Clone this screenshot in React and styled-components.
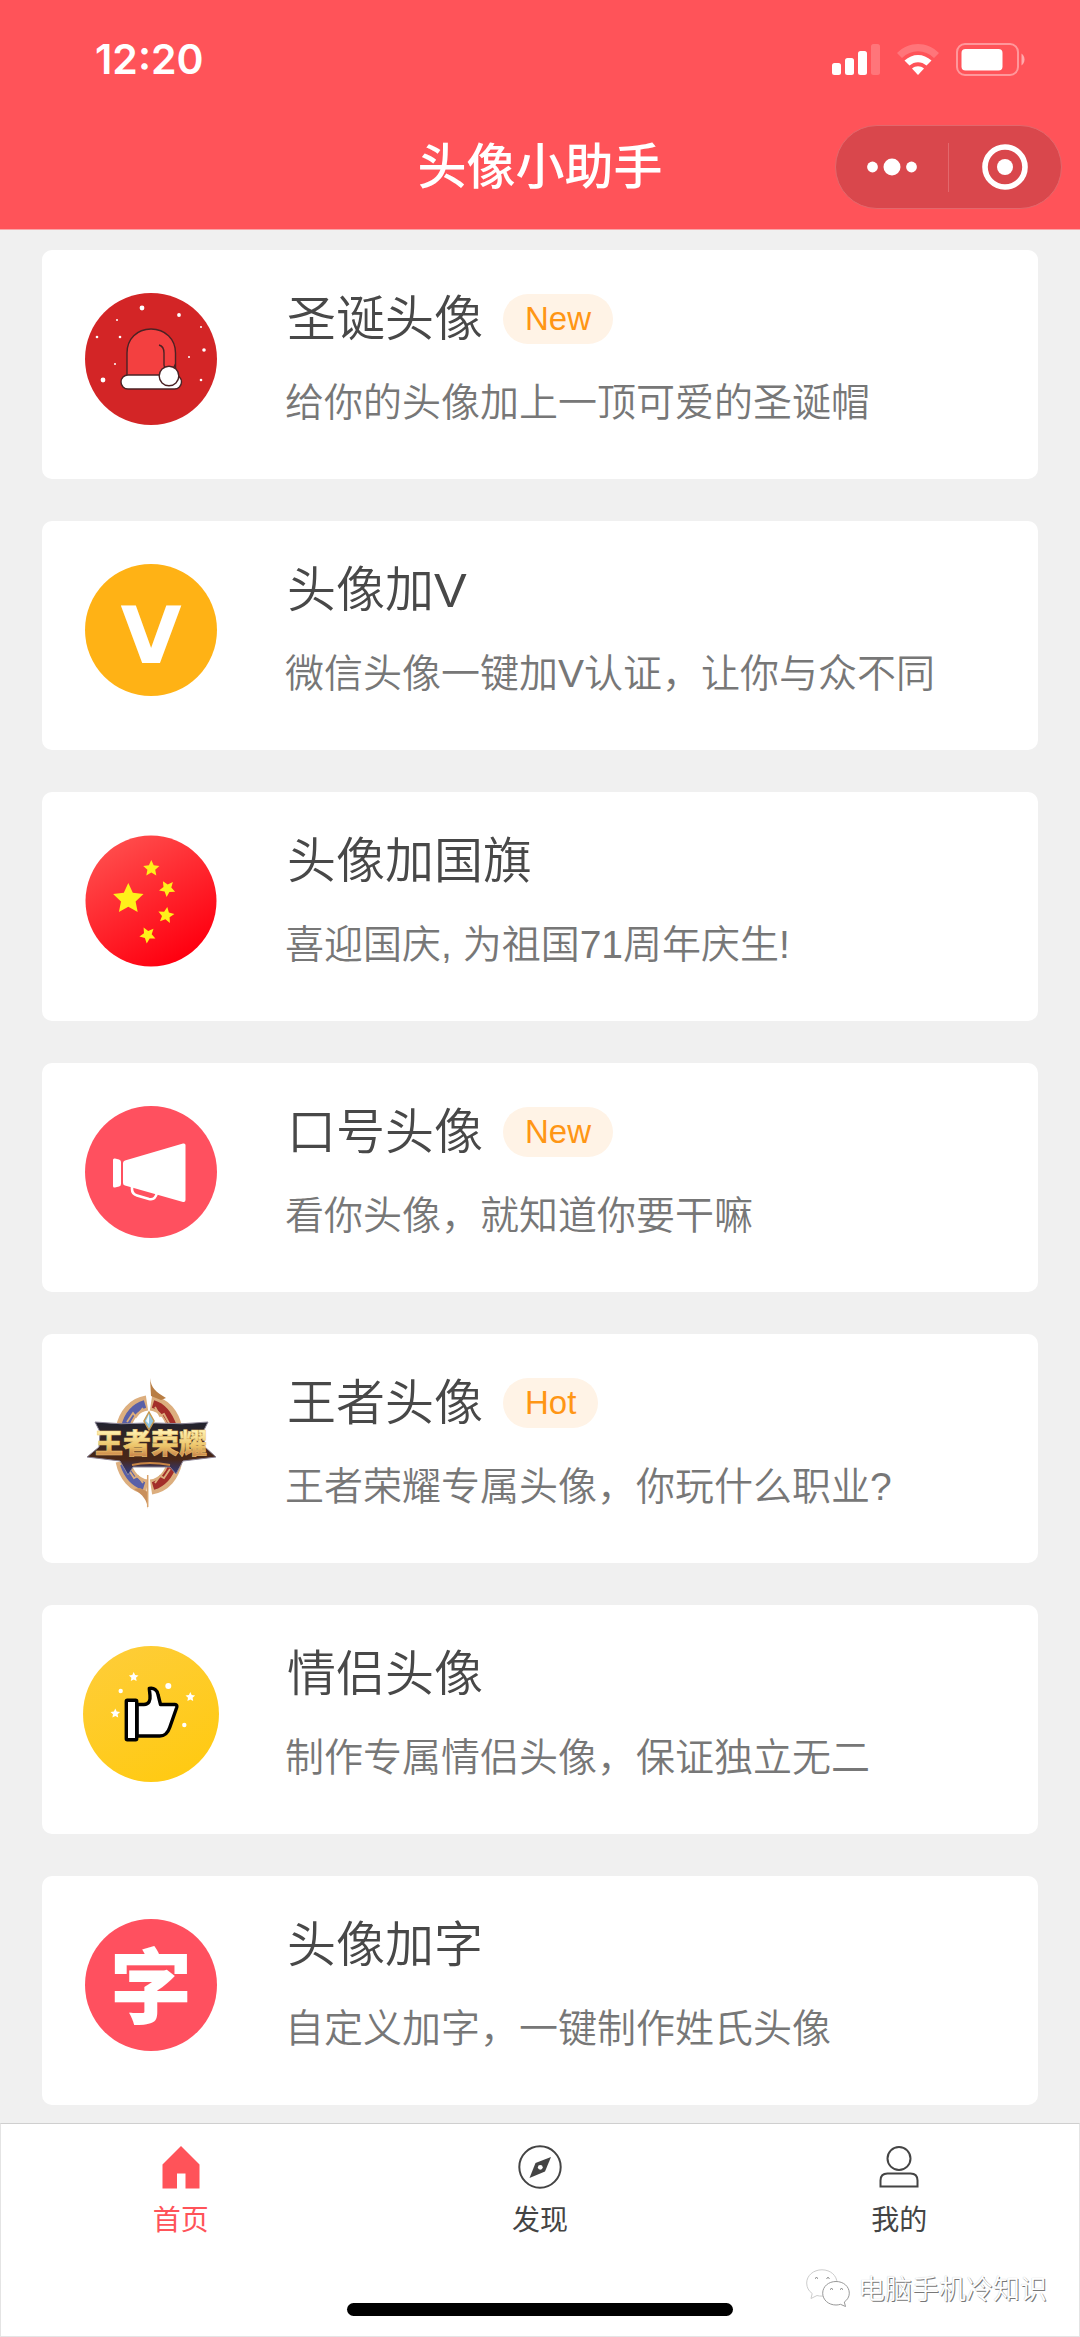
import styled, { createGlobalStyle } from 'styled-components';

const GlobalStyle = createGlobalStyle`
    * {
        box-sizing: border-box;
    }
    body {
        margin: 0;
        background: #f0f0f0;
        font-family: "Liberation Sans", "Noto Sans CJK SC", sans-serif;
    }
    a {
        color: inherit;
        text-decoration: none;
    }
    svg {
        display: block;
    }
`;

const Page = styled.div`
    display: flex;
    flex-direction: column;
    min-height: 100vh;
`;

const Header = styled.header`
    background: #ff5359;
    color: #fff;
    padding-bottom: 13px;
    border-bottom: 1px solid #f9a5a8;
`;

const StatusBar = styled.div`
    display: flex;
    align-items: center;
    justify-content: space-between;
    height: 118px;
    padding: 0 55px 0 95px;
`;

const Time = styled.span`
    font-family: Inter, sans-serif;
    font-size: 41px;
    font-weight: 600;
    line-height: 48px;
`;

const StatusIcons = styled.div`
    display: flex;
    align-items: center;
    gap: 17px;
`;

const NavBar = styled.div`
    display: grid;
    grid-template-columns: 1fr auto 1fr;
    align-items: center;
    height: 98px;
    padding: 0 18px;
`;

const PageTitle = styled.h1`
    grid-column: 2;
    margin: 0;
    font-size: 49px;
    font-weight: 500;
    line-height: 60px;
`;

const Capsule = styled.div`
    justify-self: end;
    display: flex;
    align-items: center;
    width: 227px;
    height: 84px;
    border: 1px solid #e3686c;
    border-radius: 42px;
    background: #d9474c;
`;

const CapsuleButton = styled.button`
    flex: 1;
    display: flex;
    justify-content: center;
    align-items: center;
    height: 49px;
    padding: 0;
    border: none;
    background: none;
    color: #fff;
    cursor: pointer;
    & + & {
        border-left: 1px solid #e3686c;
    }
`;

const List = styled.main`
    flex: 1;
    display: flex;
    flex-direction: column;
    gap: 42px;
    padding: 20px 42px 18px;
`;

const Card = styled.a`
    display: flex;
    align-items: center;
    gap: 68px;
    padding: 39px 43px 51px;
    border-radius: 10px;
    background: #fff;
`;

const CardIcon = styled.svg`
    flex: none;
    width: 132px;
    height: 132px;
    overflow: visible;
`;

const IconText = styled.text`
    font-family: ${props => props.$family || '"Noto Sans CJK SC"'}, sans-serif;
    font-size: ${props => props.$size}px;
    font-weight: ${props => props.$weight || 900};
    text-anchor: middle;
`;

const CardTitle = styled.h2`
    display: flex;
    align-items: center;
    gap: 20px;
    margin: 0 0 29px 2px;
    color: #484848;
    font-size: 49px;
    font-weight: 350;
    line-height: 60px;
`;

const Badge = styled.span`
    padding: 0 22px;
    border-radius: 25px;
    background: #fff3e6;
    color: #ff9615;
    font-size: 33px;
    line-height: 50px;
`;

const CardText = styled.p`
    margin: 0;
    color: #777;
    font-size: 39px;
    font-weight: 350;
    line-height: 50px;
`;

const TabBar = styled.footer`
    position: relative;
    display: flex;
    flex-direction: column;
    justify-content: space-between;
    align-items: center;
    height: 214px;
    padding: 21px 0 20px;
    border: 1px solid #e4e4e4;
    border-top-color: #cfcfcf;
    background: #fff;
`;

const Tabs = styled.nav`
    display: grid;
    grid-template-columns: repeat(3, 1fr);
    width: 100%;
`;

const Tab = styled.a`
    display: flex;
    flex-direction: column;
    align-items: center;
    gap: 12px;
    color: ${props => props.$active ? '#ff5359' : '#444'};
    font-size: 28px;
    line-height: 40px;
`;

const HomeIndicator = styled.div`
    width: 386px;
    height: 13px;
    border-radius: 7px;
    background: #000;
`;

const Watermark = styled.div`
    position: absolute;
    right: 32px;
    bottom: 28px;
    display: flex;
    align-items: center;
    gap: 8px;
    color: #fff;
    font-family: "Noto Sans CJK SC", sans-serif;
    font-size: 27px;
    font-weight: 350;
    line-height: 40px;
    text-shadow: 1px 1px 0 #777, 0 0 1px #bbb;
`;

function starPoints(cx, cy, r, turn = 0, inner = 0.48) {
    const points = [];
    for (let i = 0; i < 10; i++) {
        const radius = i % 2 ? r * inner : r;
        const angle = (i * 36 + turn) * Math.PI / 180;
        points.push(`${(cx + radius * Math.sin(angle)).toFixed(1)},${(cy - radius * Math.cos(angle)).toFixed(1)}`);
    }
    return points.join(' ');
}

const SNOW = [
    [57, 15, 2.4], [94, 22, 1.9], [32, 27, 1], [116, 34, 1], [12, 44, 1.3], [35, 44, 1.3],
    [119, 57, 1.8], [104, 64, 1], [30, 71, 1], [18, 87, 2.4], [116, 87, 1.3],
];

function HatIcon() {
    return (
        <CardIcon viewBox="0 0 132 132">
            <circle cx="66" cy="66" r="66" fill="#d32526"/>
            {SNOW.map(([x, y, r]) => <circle key={`${x}-${y}`} cx={x} cy={y} r={r} fill="#fff"/>)}
            <g stroke="#4b2224" strokeWidth="1.4" strokeLinejoin="round">
                <path d="M42 83V60C42 46 52 36 66 36s24.500 10 24.500 24v23z" fill="#f34040"/>
                <path d="M74 52c4 1 5 4 5 8v12c0 2 1 3 2 4M90.500 71l-2 4" fill="none"/>
                <rect x="36" y="82" width="60.500" height="14" rx="7" fill="#fff"/>
                <circle cx="84" cy="83" r="9.800" fill="#fff"/>
            </g>
        </CardIcon>
    );
}

function VIcon() {
    return (
        <CardIcon viewBox="0 0 132 132">
            <circle cx="66" cy="66" r="66" fill="#ffb215"/>
            <IconText x="66" y="99" fill="#fff" $family='"DejaVu Sans"' $size={79} $weight={700}>V</IconText>
        </CardIcon>
    );
}

function FlagIcon() {
    return (
        <CardIcon viewBox="0 0 132 132">
            <defs>
                <linearGradient id="flag" x1="0.2" y1="0.1" x2="0.7" y2="0.95">
                    <stop offset="0" stopColor="#ff4a4a"/>
                    <stop offset="1" stopColor="#ff0010"/>
                </linearGradient>
            </defs>
            <circle cx="66" cy="66" r="65.500" fill="url(#flag)"/>
            <g fill="#fff01a">
                <polygon points={starPoints(43.3, 64, 16)}/>
                <polygon points={starPoints(66.3, 33.5, 8.5)}/>
                <polygon points={starPoints(82.3, 53.5, 8.5, 41)}/>
                <polygon points={starPoints(81, 80.3, 8.5, 9)}/>
                <polygon points={starPoints(62.7, 100, 8.5, 43)}/>
            </g>
        </CardIcon>
    );
}

function MegaphoneIcon() {
    return (
        <CardIcon viewBox="0 0 132 132">
            <circle cx="66" cy="66" r="66" fill="#ff505f"/>
            <path d="M28 54q0-2 2-1.500l4 1q2 .5 2 2.500v22q0 2-2 2.500l-4 1q-2 .5-2-1.500z" fill="#fff"/>
            <path d="M38 57q0-2 2-2.500l58-17q2.500-.5 2.500 1.500v55q0 2.500-2.500 2L40 79.500q-2-.5-2-2.500z" fill="#fff"/>
            <path d="M47 80v3q0 5 5 6.500l12 3.500q6 1.500 8-6" fill="none" stroke="#fff" strokeWidth="2.600"/>
        </CardIcon>
    );
}

function KingIcon() {
    return (
        <CardIcon viewBox="0 0 132 132">
            <defs>
                <linearGradient id="gold" x1="0" y1="0" x2="0" y2="1">
                    <stop offset="0.2" stopColor="#fff3b4"/>
                    <stop offset="0.6" stopColor="#ecc468"/>
                    <stop offset="1" stopColor="#b5603a"/>
                </linearGradient>
                <linearGradient id="banner" x1="0" y1="0" x2="0" y2="1">
                    <stop offset="0" stopColor="#20222f"/>
                    <stop offset="0.7" stopColor="#4a2716"/>
                    <stop offset="1" stopColor="#2c3c8c"/>
                </linearGradient>
            </defs>
            <g fill="none" strokeLinecap="butt">
                <path d="M62 26C49 28 41 38 38 52M38 84c3 14 11 24 24 26M66 26c13 2 21 12 24 26M90 84c-3 14-11 24-24 26" stroke="#dcae7e" strokeWidth="15"/>
                <path d="M60 27C50 30 43 38 40 50M39 87c4 12 10 19 20 22" stroke="#5960a8" strokeWidth="8"/>
                <path d="M68 27c10 3 16 11 20 23M88 87c-4 12-10 19-20 22" stroke="#a32e2a" strokeWidth="8"/>
                <path d="M42 45l6-9 3 4 7-9M43 92l6 9 4-2 5 7M70 30l5 9 4-2 6 11M85 92l-6 9-4-2-5 7" stroke="#dcae7e" strokeWidth="1.800"/>
            </g>
            <path d="M65 1c1 10 6 14 16 20l-5 2-10-4z" fill="#b87d43"/>
            <path d="M63 132c-1-9-5-14-14-20l6-1 8 4z" fill="#c98f5c"/>
            <path d="M62.700 98v32" stroke="#d9a36c" strokeWidth="1.500"/>
            <path d="M10 45q26 3 52 1h9q26 2 52-1l-5 10 2 15 11 10-33 4-7 13-6-7H48l-5 8-8-14L2 80l12-10 1-15z" fill="url(#banner)" stroke="#8d8698" strokeWidth="1"/>
            <path d="M47 88q17-4 38 0" fill="none" stroke="#c98545" strokeWidth="2"/>
            <IconText x="66" y="77" fill="url(#gold)" stroke="#edc873" strokeWidth="0.500" $size={28}>王者荣耀</IconText>
            <path d="M64 35l5 9-5 9-5-9z" fill="#8fc4e0" stroke="#c79a50" strokeWidth="1.500"/>
            <path d="M64 37l-3 7 3 3z" fill="#eef9ff"/>
        </CardIcon>
    );
}

function ThumbIcon() {
    return (
        <CardIcon viewBox="2 2 132 132">
            <defs>
                <linearGradient id="sun" x1="0.2" y1="0" x2="0.7" y2="1">
                    <stop offset="0" stopColor="#fecd38"/>
                    <stop offset="1" stopColor="#ffca12"/>
                </linearGradient>
            </defs>
            <circle cx="68" cy="68" r="68" fill="url(#sun)"/>
            <g fill="#fff">
                <polygon points={starPoints(50.7, 31, 5)}/>
                <polygon points={starPoints(107.3, 51, 5)}/>
                <polygon points={starPoints(32.3, 67.5, 5)}/>
                <circle cx="85.300" cy="40" r="3"/>
                <circle cx="37.700" cy="45" r="2.200"/>
                <circle cx="101.300" cy="79" r="2.200"/>
            </g>
            <g fill="#fff" stroke="#000" strokeWidth="3.400" strokeLinejoin="round">
                <path d="M54 58.500h7c5 0 6.500-4 6-9l-.7-7c5-1 8 2 8.700 6l2.500 10H92q2.500 0 1.700 3l-7 20c-2 6-5 8.500-10 8.500H54z"/>
                <rect x="43.300" y="54.300" width="10.400" height="39.400" rx="1"/>
            </g>
        </CardIcon>
    );
}

function WordIcon() {
    return (
        <CardIcon viewBox="0 0 132 132">
            <circle cx="66" cy="66" r="66" fill="#ff505f"/>
            <IconText x="66" y="98" fill="#fff" $size={82}>字</IconText>
        </CardIcon>
    );
}

function SignalIcon() {
    return (
        <svg width="48" height="31" viewBox="0 0 48 31" fill="#fff">
            <rect y="19" width="9" height="12" rx="2.500"/>
            <rect x="13" y="14" width="9" height="17" rx="2.500"/>
            <rect x="26" y="7" width="9" height="24" rx="2.500"/>
            <rect x="39" width="9" height="31" rx="2.500" opacity="0.2"/>
        </svg>
    );
}

function WifiIcon() {
    return (
        <svg width="42" height="31" viewBox="0 0 42 31" fill="#fff">
            <path d="M0 9C12-3 30-3 42 9l-5 5C28 5 14 5 5 14z" opacity="0.2"/>
            <path d="M7.500 16.500c8-7.500 19-7.500 27 0l-5 5c-5-4.500-12-4.500-17 0z"/>
            <path d="M15 24.500c3.500-3 8.500-3 12 0L21 31z"/>
        </svg>
    );
}

function BatteryIcon() {
    return (
        <svg width="69" height="33" viewBox="0 0 69 33">
            <rect x="1" y="1" width="61" height="31" rx="8" fill="none" stroke="#fff" strokeWidth="2" opacity="0.4"/>
            <rect x="5.500" y="6" width="41" height="21.500" rx="4" fill="#fff"/>
            <path d="M65.500 10.500c4 3 4 9 0 12z" fill="#fff" opacity="0.5"/>
        </svg>
    );
}

function HomeIcon() {
    return (
        <svg width="44" height="44" viewBox="0 0 44 44">
            <path d="M22 1l18.500 18.500v24H26.500v-15h-8.500v15H3.500v-24z" fill="currentColor"/>
        </svg>
    );
}

function CompassIcon() {
    return (
        <svg width="44" height="44" viewBox="0 0 44 44">
            <circle cx="22" cy="22" r="20.700" fill="none" stroke="currentColor" strokeWidth="2"/>
            <path d="M33 12l-6 14.500L11.500 33l6-15z" fill="currentColor"/>
            <circle cx="22.300" cy="22.300" r="2.400" fill="#fff"/>
        </svg>
    );
}

function PersonIcon() {
    return (
        <svg width="44" height="44" viewBox="0 0 44 44" fill="none" stroke="currentColor" strokeWidth="2">
            <circle cx="22" cy="13.500" r="11.500"/>
            <path d="M3.500 41.500v-6c0-4.500 2.500-7 7-7h23c4.500 0 7 2.500 7 7v6z"/>
        </svg>
    );
}

function WechatIcon() {
    return (
        <svg width="44" height="38" viewBox="0 0 44 38" fill="#fff" stroke="#999" strokeWidth="1">
            <path d="M16 .8C7.500.8.700 6.500.7 14c0 4.500 2 8 5.500 10.500L5 29.500l6-3c1.500.5 3 .6 5 .6 8.500 0 15-5.500 15-13S24.500.8 16 .8z" stroke="#ccc"/>
            <path d="M30 12.500c-7.500 0-13.300 5-13.300 11.700S22.500 36 30 36c1.500 0 3-.2 4.500-.7l5 2.200-1.200-4.500c3-2 5-5.200 5-8.800 0-6.700-5.800-11.700-13.300-11.700z"/>
            <path d="M9 9.500q1.500-2 3 0M20.500 9.500q1.500-2 3 0M24 20.500q1.500-2 3 0M34 20.500q1.500-2 3 0" fill="none" stroke="#777"/>
        </svg>
    );
}

const CARDS = [
    { icon: HatIcon, title: '圣诞头像', badge: 'New', text: '给你的头像加上一顶可爱的圣诞帽' },
    { icon: VIcon, title: '头像加V', text: '微信头像一键加V认证，让你与众不同' },
    { icon: FlagIcon, title: '头像加国旗', text: '喜迎国庆, 为祖国71周年庆生!' },
    { icon: MegaphoneIcon, title: '口号头像', badge: 'New', text: '看你头像，就知道你要干嘛' },
    { icon: KingIcon, title: '王者头像', badge: 'Hot', text: '王者荣耀专属头像，你玩什么职业?' },
    { icon: ThumbIcon, title: '情侣头像', text: '制作专属情侣头像，保证独立无二' },
    { icon: WordIcon, title: '头像加字', text: '自定义加字，一键制作姓氏头像' },
];

const TABS = [
    { icon: HomeIcon, label: '首页', active: true },
    { icon: CompassIcon, label: '发现' },
    { icon: PersonIcon, label: '我的' },
];

function App() {
    return (
        <Page>
            <GlobalStyle/>
            <Header>
                <StatusBar>
                    <Time>12:20</Time>
                    <StatusIcons>
                        <SignalIcon/>
                        <WifiIcon/>
                        <BatteryIcon/>
                    </StatusIcons>
                </StatusBar>
                <NavBar>
                    <PageTitle>头像小助手</PageTitle>
                    <Capsule>
                        <CapsuleButton aria-label="更多">
                            <svg width="50" height="18" viewBox="0 0 50 18" fill="currentColor">
                                <circle cx="5.500" cy="9" r="5.400"/>
                                <circle cx="25" cy="9" r="8.500"/>
                                <circle cx="44.500" cy="9" r="5.400"/>
                            </svg>
                        </CapsuleButton>
                        <CapsuleButton aria-label="关闭">
                            <svg width="46" height="46" viewBox="0 0 46 46">
                                <circle cx="23" cy="23" r="20" fill="none" stroke="currentColor" strokeWidth="5.600"/>
                                <circle cx="23" cy="23" r="8" fill="currentColor"/>
                            </svg>
                        </CapsuleButton>
                    </Capsule>
                </NavBar>
            </Header>
            <List>
                {CARDS.map(({ icon: Icon, title, badge, text }) => (
                    <Card href="#" key={title}>
                        <Icon/>
                        <div>
                            <CardTitle>
                                {title}
                                {badge && <Badge>{badge}</Badge>}
                            </CardTitle>
                            <CardText>{text}</CardText>
                        </div>
                    </Card>
                ))}
            </List>
            <TabBar>
                <Tabs>
                    {TABS.map(({ icon: Icon, label, active }) => (
                        <Tab href="#" key={label} $active={active}>
                            <Icon/>
                            {label}
                        </Tab>
                    ))}
                </Tabs>
                <HomeIndicator/>
                <Watermark>
                    <WechatIcon/>
                    电脑手机冷知识
                </Watermark>
            </TabBar>
        </Page>
    );
}

export default App;
